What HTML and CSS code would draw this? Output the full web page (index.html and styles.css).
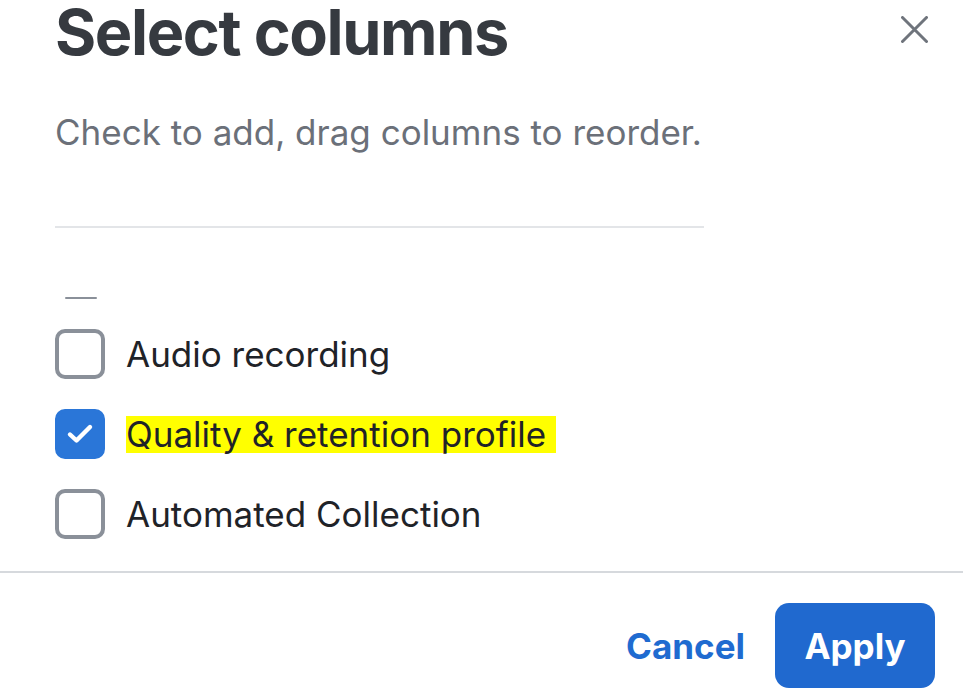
FILE: index.html
```html
<!DOCTYPE html>
<html>
<head>
<meta charset="utf-8">
<link rel="stylesheet" href="styles.css">
</head>
<body>
<div class="dialog">
  <header class="head">
    <h1 class="title">Select columns</h1>
    <button class="close" aria-label="Close">
      <svg width="27" height="27" viewBox="0 0 27 27"><path d="M1.5 1.5 L25.5 25.5 M25.5 1.5 L1.5 25.5" stroke="#6f747c" stroke-width="3" stroke-linecap="round"/></svg>
    </button>
  </header>
  <p class="subtitle">Check to add, drag columns to reorder.</p>
  <div class="divider"></div>
  <div class="list">
    <div class="cut"></div>
    <label class="item"><span class="box"></span><span class="label">Audio recording</span></label>
    <label class="item"><span class="box checked"><svg width="30" height="30" viewBox="0 0 30 30"><path d="M5 15.5 L11.5 21.5 L25 8" fill="none" stroke="#fff" stroke-width="4.4" stroke-linecap="round" stroke-linejoin="round"/></svg></span><span class="label hl">Quality &amp; retention profile</span></label>
    <label class="item"><span class="box"></span><span class="label">Automated Collection</span></label>
  </div>
  <footer class="foot">
    <button class="cancel">Cancel</button>
    <button class="apply">Apply</button>
  </footer>
</div>
</body>
</html>
```
FILE: styles.css
```css
* { box-sizing: border-box; }
html, body { margin: 0; padding: 0; background: #fff; }
body { font-family: Inter, "Noto Sans", sans-serif; color: #1f2328; width: 963px; height: 694px; overflow: hidden; }
.dialog { display: flex; flex-direction: column; }
.head { display: flex; justify-content: space-between; align-items: flex-start; padding: 0 35px 0 55px; }
.title { margin: 0; font-family: Inter, sans-serif; font-weight: 700; font-size: 63px; line-height: 64px; color: #363a40; letter-spacing: -1.4px; }
.close { border: 0; background: none; padding: 0; margin-top: 16px; width: 27px; height: 27px; cursor: pointer; }
.subtitle { margin: 47px 0 0 55px; font-size: 35px; line-height: 42px; color: #6b7079; }
.divider { margin: 73px 0 0 55px; width: 649px; height: 2px; background: #e3e5e8; }
.list { padding-left: 55px; display: flex; flex-direction: column; }
.cut { margin: 69px 0 0 10px; width: 32px; height: 2px; background: #8a9099; border-radius: 1px; }
.item { display: flex; align-items: center; gap: 21px; height: 80px; }
.item:first-of-type { margin-top: 15px; }
.box { width: 50px; height: 50px; border: 4px solid #8a9099; border-radius: 10px; display: flex; align-items: center; justify-content: center; flex: none; }
.box.checked { background: #2a76d8; border-color: #2a76d8; }
.label { font-size: 35px; color: #1f2328; }
.hl { background: #ffff00; display: inline-block; line-height: 37px; padding: 0 10px 0 0; }
.foot { margin-top: 17px; border-top: 2px solid #d6d9dd; display: flex; justify-content: flex-end; align-items: center; gap: 30px; padding: 30px 28px 0 0; }
.cancel { border: 0; background: none; font-family: Inter, sans-serif; font-weight: 700; font-size: 35px; color: #1f6bd0; padding: 0; }
.apply { border: 0; background: #2069cf; color: #fff; font-family: Inter, sans-serif; font-weight: 700; font-size: 35px; width: 160px; height: 85px; border-radius: 14px; }
```
